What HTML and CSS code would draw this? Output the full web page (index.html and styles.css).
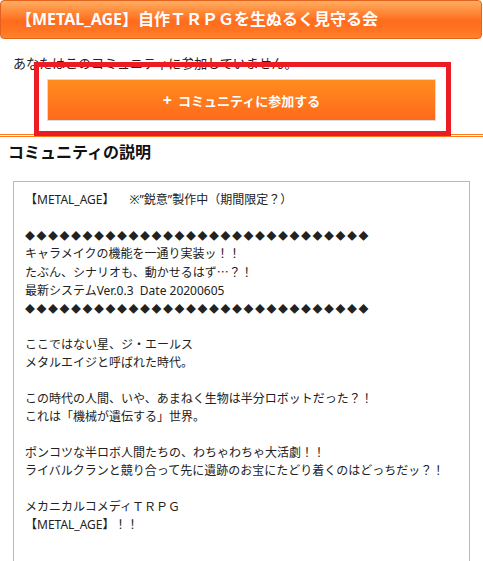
FILE: index.html
```html
<!DOCTYPE html>
<html lang="ja">
<head>
<meta charset="utf-8">
<title>【METAL_AGE】自作ＴＲＰＧを生ぬるく見守る会</title>
<link rel="stylesheet" href="styles.css">
</head>
<body>
<h1 class="page-title">【METAL_AGE】自作ＴＲＰＧを生ぬるく見守る会</h1>
<div class="join">
  <p class="status">あなたはこのコミュニティに参加していません。</p>
  <button class="join-btn" type="button"><span class="plus">+</span>コミュニティに参加する</button>
  <div class="highlight"></div>
</div>
<hr class="divider">
<h2 class="section-title">コミュニティの説明</h2>
<div class="desc">
<p>【METAL_AGE】　<span class="gap"></span>※”鋭意”製作中（期間限定？）</p>
<p>&nbsp;</p>
<p class="diamonds">◆◆◆◆◆◆◆◆◆◆◆◆◆◆◆◆◆◆◆◆◆◆◆◆◆◆◆◆◆◆</p>
<p>キャラメイクの機能を一通り実装ッ！！</p>
<p>たぶん、シナリオも、動かせるはず<span class="cjk">…</span>？！</p>
<p>最新システムVer.0.3&nbsp; Date 20200605</p>
<p class="diamonds">◆◆◆◆◆◆◆◆◆◆◆◆◆◆◆◆◆◆◆◆◆◆◆◆◆◆◆◆◆◆</p>
<p>&nbsp;</p>
<p>ここではない星、ジ・エールス</p>
<p>メタルエイジと呼ばれた時代。</p>
<p>&nbsp;</p>
<p>この時代の人間、いや、あまねく生物は半分ロボットだった？！</p>
<p>これは「機械が遺伝する」世界。</p>
<p>&nbsp;</p>
<p>ポンコツな半ロボ人間たちの、わちゃわちゃ大活劇！！</p>
<p>ライバルクランと競り合って先に遺跡のお宝にたどり着くのはどっちだッ？！</p>
<p>&nbsp;</p>
<p>メカニカルコメディＴＲＰＧ</p>
<p>【METAL_AGE】！！</p>
<p>&nbsp;</p>
<p>&nbsp;</p>
</div>
</body>
</html>
```

FILE: styles.css
```css
html, body {
  margin: 0;
  padding: 0;
  background: #fff;
}
body {
  font-family: "Noto Sans", "Noto Sans CJK JP", sans-serif;
  color: #222;
}
.page-title {
  margin: 0 1px 0 0;
  height: 39px;
  box-sizing: border-box;
  border: 1px solid #e2621f;
  border-radius: 4px;
  background: linear-gradient(#ffad60 0%, #ff8b3c 28%, #ff6b1c 55%, #ff7522 80%, #ff8428 100%);
  color: #fff;
  font-size: 16px;
  font-weight: bold;
  line-height: 37px;
  padding-left: 15px;
  white-space: nowrap;
  overflow: hidden;
}
.join {
  position: relative;
  display: flex;
  flex-direction: column;
}
.status {
  margin: 11px 0 0 13px;
  font-size: 13px;
  line-height: 26px;
  color: #222;
}
.join-btn {
  margin: 3px 47px 0 47px;
  height: 42px;
  border: 1px solid #dcdcdc;
  background: linear-gradient(#ff8c1c, #ff6a1c);
  color: #fff;
  font-family: "Noto Sans", "Noto Sans CJK JP", sans-serif;
  font-size: 13px;
  font-weight: bold;
  padding: 0;
}
.plus {
  font-size: 16px;
  line-height: 1;
  margin-right: 6px;
}
.highlight {
  position: absolute;
  left: 34px;
  top: 23px;
  width: 417px;
  height: 74px;
  box-sizing: border-box;
  border: 5px solid #ed1c24;
  pointer-events: none;
}
.divider {
  margin: 13px 0 0 0;
  border: 0;
  border-top: 3px double #ff7a1c;
  height: 0;
}
.section-title {
  margin: 3px 0 0 8px;
  font-size: 16px;
  font-weight: bold;
  line-height: 24px;
  color: #111;
}
.desc {
  margin: 17px 13px 0 13px;
  border: 1px solid #a9c0c4;
  padding: 9px 11px 10px 11px;
  font-size: 12px;
  line-height: 18px;
  color: #222;
}
.desc p {
  margin: 0;
  white-space: nowrap;
}
.cjk {
  font-family: "Noto Sans CJK JP", sans-serif;
}
.gap {
  display: inline-block;
  width: 9px;
}
.diamonds {
  font-size: 10px;
  letter-spacing: 1.5px;
}
```
